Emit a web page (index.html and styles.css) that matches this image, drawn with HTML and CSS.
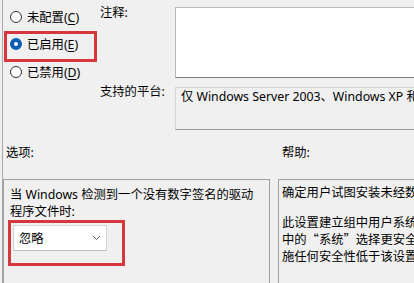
FILE: index.html
```html
<!DOCTYPE html>
<html lang="zh-CN">
<head>
    <meta charset="UTF-8">
    <meta name="viewport" content="width=device-width, initial-scale=1.0">
    <title>代码签名设置</title>
    <link rel="stylesheet" href="styles.css">
</head>
<body>
    <div class="window">
        <div class="top">
            <div class="states">
                <label class="radio">
                    <span class="dot"></span>
                    <span>未配置(<u>C</u>)</span>
                </label>
                <label class="radio radio-marked">
                    <span class="dot dot-on"></span>
                    <span>已启用(<u>E</u>)</span>
                </label>
                <label class="radio radio-last">
                    <span class="dot"></span>
                    <span>已禁用(<u>D</u>)</span>
                </label>
            </div>

            <div class="fields">
                <div class="field-label label-comment">注释:</div>
                <div class="comment-box"></div>
                <div class="field-label label-platform">支持的平台:</div>
                <div class="platform-box">仅 Windows Server 2003、Windows XP 和 Windows 2000 操作系统</div>
            </div>
        </div>

        <div class="bottom">
            <div class="col-options">
                <div class="section-title">选项:</div>
                <div class="panel panel-options">
                    <div class="options-text">当 Windows 检测到一个没有数字签名的驱动<br>程序文件时:</div>
                    <div class="marked-select">
                        <div class="select">
                            <span>忽略</span>
                            <svg class="chevron" width="9" height="6" viewBox="0 0 9 6">
                                <path d="M1 1 L4.5 4.5 L8 1" fill="none" stroke="#5f5f5f" stroke-width="1"/>
                            </svg>
                        </div>
                    </div>
                </div>
            </div>

            <div class="col-help">
                <div class="section-title title-help">帮助:</div>
                <div class="panel panel-help">
                    <p>确定用户试图安装未经数字签名(或签名无效)的设备驱动程序时系统的响应。</p>
                    <p>此设置建立组中用户系统上能够应用的最低安全响应。用户可以使用<span class="cjk">“控制面板”</span><br>中的<span class="cjk">“系统”</span>选择更安全的设置，但是当启用该设置后，系统不实<br>施任何安全性低于该设置的设置。</p>
                </div>
            </div>
        </div>
    </div>
</body>
</html>
```

FILE: styles.css
```css
html, body {
    margin: 0;
    height: 100%;
    overflow: hidden;
}
body {
    background: #f0f0f0;
    color: #000;
    font-family: "Noto Sans", "Noto Sans CJK SC", sans-serif;
    font-size: 12.3px;
    line-height: 17px;
}
.cjk {
    font-family: "Noto Sans CJK SC", sans-serif;
}
.window {
    margin-left: 2px;
    border-left: 1px solid #a8a8a8;
    height: 100%;
}

/* top: state radios + comment / platform */
.top {
    display: flex;
    height: 131px;
}
.states {
    width: 94px;
    flex-shrink: 0;
    padding-top: 3px;
}
.radio {
    display: flex;
    align-items: center;
    height: 28px;
    padding-left: 7px;
    box-sizing: border-box;
}
.radio-marked {
    height: 31px;
    margin-left: 1px;
    padding-left: 3px;
    padding-bottom: 5px;
    border: 3px solid #d5373d;
}
.radio-last {
    height: 20px;
}
.dot {
    width: 12px;
    height: 12px;
    box-sizing: border-box;
    border: 1px solid #333;
    border-radius: 50%;
    margin-right: 5px;
    background: #fff;
}
.dot-on {
    border: 4px solid #0a5fb4;
    background: #fff;
}
u {
    text-decoration-thickness: 1px;
    text-underline-offset: 2px;
}

.fields {
    flex: 1;
    display: grid;
    grid-template-columns: 78px 1fr;
    grid-template-rows: 71px 43px;
    row-gap: 9px;
    padding-top: 7px;
    margin-right: -20px;
}
.field-label {
    padding-left: 3px;
}
.label-comment {
    margin-top: -3px;
}
.label-platform {
    margin-top: -4px;
}
.comment-box {
    background: #fff;
    border: 1px solid #b9b9b9;
    border-bottom-color: #7a7a7a;
}
.platform-box {
    border: 1px solid #d4d4d4;
    border-bottom-color: #9a9a9a;
    padding: 0 0 0 5px;
    white-space: nowrap;
    overflow: hidden;
}

/* bottom: options + help */
.bottom {
    display: flex;
    gap: 8px;
    height: 152px;
}
.section-title {
    height: 48px;
    box-sizing: border-box;
    padding: 13px 0 0 3px;
}
.title-help {
    padding-left: 4px;
}
.col-options {
    width: 267px;
    flex-shrink: 0;
}
.col-help {
    flex: 1;
    margin-right: -30px;
}
.panel {
    border: 1px solid #a0a0a0;
    height: 120px;
}
.panel-options {
    padding: 6px 6px 0 6px;
}
.options-text {
    white-space: nowrap;
}
.marked-select {
    width: 117px;
    height: 46px;
    box-sizing: border-box;
    margin-left: -2px;
    border: 3px solid #d5373d;
    padding: 2px 0 0 2px;
}
.select {
    width: 94px;
    height: 26px;
    box-sizing: border-box;
    background: #fff;
    border: 1px solid #d6d6d6;
    border-bottom-color: #bdbdbd;
    display: flex;
    align-items: center;
    justify-content: space-between;
    padding: 0 5px 0 5px;
}
.chevron {
    display: block;
}
.panel-help {
    padding: 4px 0 0 3px;
    white-space: nowrap;
    overflow: hidden;
}
.panel-help p {
    margin: 0 0 13px;
}
```
